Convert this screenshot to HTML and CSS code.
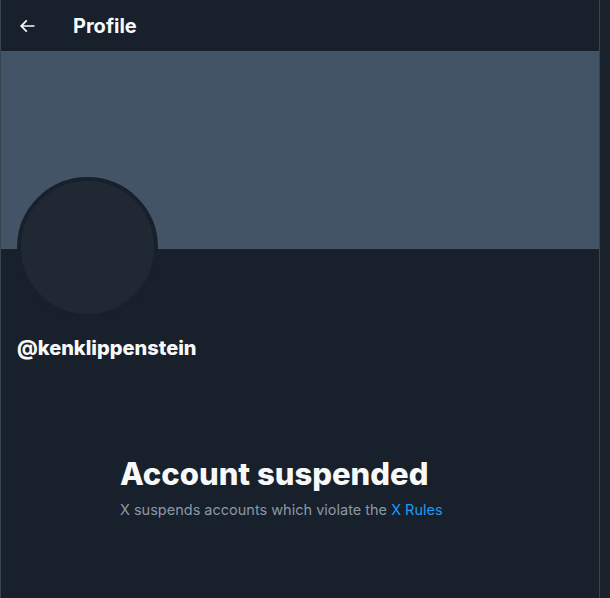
FILE: index.html
```html
<!DOCTYPE html>
<html lang="en">

<head>
    <meta charset="UTF-8">
    <meta name="viewport" content="width=device-width, initial-scale=1.0">
    <title>Profile</title>
    <link rel="stylesheet" href="styles.css">
</head>

<body>

    <main class="column">
        <header class="topbar">
            <button class="back" aria-label="Back">
                <svg viewBox="0 0 24 24" width="20" height="20">
                    <path d="M7.414 13l5.043 5.04-1.414 1.42L3.586 12l7.457-7.46 1.414 1.42L7.414 11H21v2H7.414z"></path>
                </svg>
            </button>
            <h1 class="title">Profile</h1>
        </header>

        <div class="banner"></div>

        <div class="profile">
            <div class="avatar"></div>
            <div class="handle">@kenklippenstein</div>
        </div>

        <div class="empty">
            <h2>Account suspended</h2>
            <p>X suspends accounts which violate the <a href="#">X Rules</a></p>
        </div>
    </main>

</body>

</html>
```

FILE: styles.css
```css
body {
    margin: 0;
    background-color: #1a222c;
    font-family: Inter, "Noto Sans", sans-serif;
    color: #f7f9f9;
}

.column {
    width: 598px;
    min-height: 598px;
    border-left: 1px solid #38444d;
    border-right: 1px solid #38444d;
    background-color: #17202b;
}

.topbar {
    height: 51px;
    display: flex;
    align-items: center;
    padding: 0 16px;
}

.back {
    width: 22px;
    height: 22px;
    padding: 0;
    margin-left: -1px;
    background: none;
    border: none;
    display: flex;
    align-items: center;
    justify-content: center;
}

.back svg {
    fill: #f7f9f9;
}

.title {
    margin: 0 0 0 35px;
    font-size: 20px;
    font-weight: 700;
    line-height: 24px;
}

.banner {
    height: 198px;
    background-color: #425466;
}

.profile {
    padding: 0 16px;
}

.avatar {
    width: 133px;
    height: 133px;
    margin-top: -72px;
    border-radius: 50%;
    border: 4px solid #17202b;
    background-color: #202833;
}

.handle {
    margin-top: 18px;
    font-size: 20px;
    font-weight: 800;
    line-height: 24px;
}

.empty {
    width: 360px;
    margin: 96px auto 0;
}

.empty h2 {
    margin: 0;
    font-size: 31px;
    font-weight: 800;
    line-height: 36px;
}

.empty p {
    margin: 8px 0 0;
    font-size: 14.5px;
    line-height: 20px;
    color: #8b98a5;
}

.empty a {
    color: #1d9bf0;
    text-decoration: none;
}
```
